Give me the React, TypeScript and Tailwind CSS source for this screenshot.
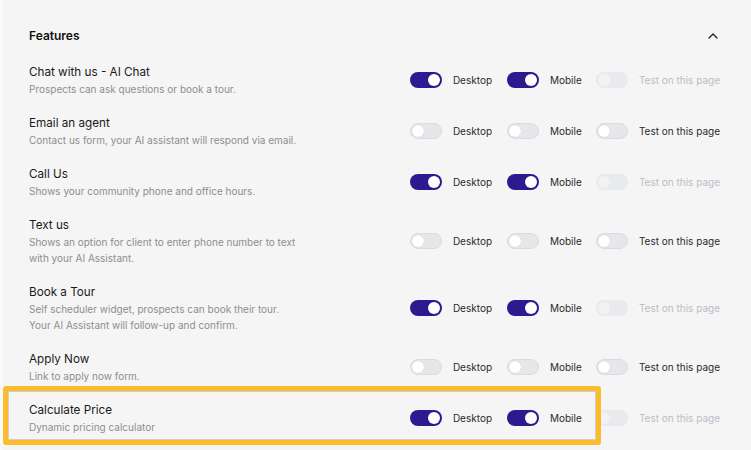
import React from 'react';

type State = 'on' | 'off' | 'disabled';

interface Feature {
  title: string;
  desc: string[];
  desktop: State;
  mobile: State;
  test: State;
  highlight?: boolean;
}

const features: Feature[] = [
  { title: 'Chat with us - AI Chat', desc: ['Prospects can ask questions or book a tour.'], desktop: 'on', mobile: 'on', test: 'disabled' },
  { title: 'Email an agent', desc: ['Contact us form, your AI assistant will respond via email.'], desktop: 'off', mobile: 'off', test: 'off' },
  { title: 'Call Us', desc: ['Shows your community phone and office hours.'], desktop: 'on', mobile: 'on', test: 'disabled' },
  {
    title: 'Text us',
    desc: ['Shows an option for client to enter phone number to text', 'with your AI Assistant.'],
    desktop: 'off',
    mobile: 'off',
    test: 'off',
  },
  {
    title: 'Book a Tour',
    desc: ['Self scheduler widget, prospects can book their tour.', 'Your AI Assistant will follow-up and confirm.'],
    desktop: 'on',
    mobile: 'on',
    test: 'disabled',
  },
  { title: 'Apply Now', desc: ['Link to apply now form.'], desktop: 'off', mobile: 'off', test: 'off' },
  { title: 'Calculate Price', desc: ['Dynamic pricing calculator'], desktop: 'on', mobile: 'on', test: 'disabled', highlight: true },
];

const Toggle: React.FC<{ state: State }> = ({ state }) => {
  if (state === 'on') {
    return (
      <div className="w-[32px] h-[16px] rounded-full bg-[#2d1a8e] flex items-center justify-end px-[2px] shrink-0">
        <div className="w-[12px] h-[12px] rounded-full bg-white" />
      </div>
    );
  }
  if (state === 'off') {
    return (
      <div className="w-[32px] h-[16px] rounded-full bg-[#e5e7ea] border border-[#d8dce1] flex items-center justify-start px-[1px] shrink-0">
        <div className="w-[12px] h-[12px] rounded-full bg-white shadow-[0_0_1px_rgba(0,0,0,0.2)]" />
      </div>
    );
  }
  return (
    <div className="w-[32px] h-[16px] rounded-full bg-[#e8eaed] flex items-center justify-start px-[2px] shrink-0">
      <div className="w-[12px] h-[12px] rounded-full bg-[#f1f2f4]" />
    </div>
  );
};

const Switch: React.FC<{ state: State; label: string; className?: string }> = ({ state, label, className }) => (
  <div className={`flex items-center gap-[11px] ${className ?? ''}`}>
    <Toggle state={state} />
    <span className={`text-[10px] leading-[16px] whitespace-nowrap ${state === 'disabled' ? 'text-[#b9bec6]' : 'text-[#2a2a2a]'}`}>
      {label}
    </span>
  </div>
);

export default function App() {
  return (
    <div
      className="w-[751px] h-[450px] overflow-hidden bg-[#f5f5f5] border-l-[3px] border-[#f9f9f9]"
      style={{ fontFamily: 'Inter, "Noto Sans", sans-serif' }}
    >
      <div className="pl-[26px] pr-[31px] pt-[27px]">
        <div className="flex items-center justify-between h-[18px]">
          <h2 className="text-[12px] leading-[18px] font-semibold text-[#111]">Features</h2>
          <svg width="10" height="6" viewBox="0 0 10 6" className="mr-[2px]" fill="none">
            <path d="M1 5L5 1L9 5" stroke="#222" strokeWidth="1.3" strokeLinecap="round" strokeLinejoin="round" />
          </svg>
        </div>

        <div className="mt-[18px] flex flex-col gap-[17px]">
          {features.map((f) => (
            <div key={f.title} className="relative flex items-center">
              {f.highlight && (
                <div className="absolute left-[-26px] top-[-15px] bottom-[-10px] w-[598px] rounded-[3px] border-[5px] border-[#fbbd2e] pointer-events-none z-10">
                  <div className="w-full h-full border border-[#cfcfcf]" />
                </div>
              )}
              <div className="flex-1 min-w-0">
                <div className="text-[11.7px] leading-[18px] text-[#1a1a1a]">{f.title}</div>
                {f.desc.map((d) => (
                  <div key={d} className="text-[10px] leading-[16px] text-[#8e8e8e]">
                    {d}
                  </div>
                ))}
              </div>
              <div className="flex items-center">
                <Switch state={f.desktop} label="Desktop" className="w-[97px]" />
                <Switch state={f.mobile} label="Mobile" className="w-[89px]" />
                <Switch state={f.test} label="Test on this page" />
              </div>
            </div>
          ))}
        </div>
      </div>
    </div>
  );
}
